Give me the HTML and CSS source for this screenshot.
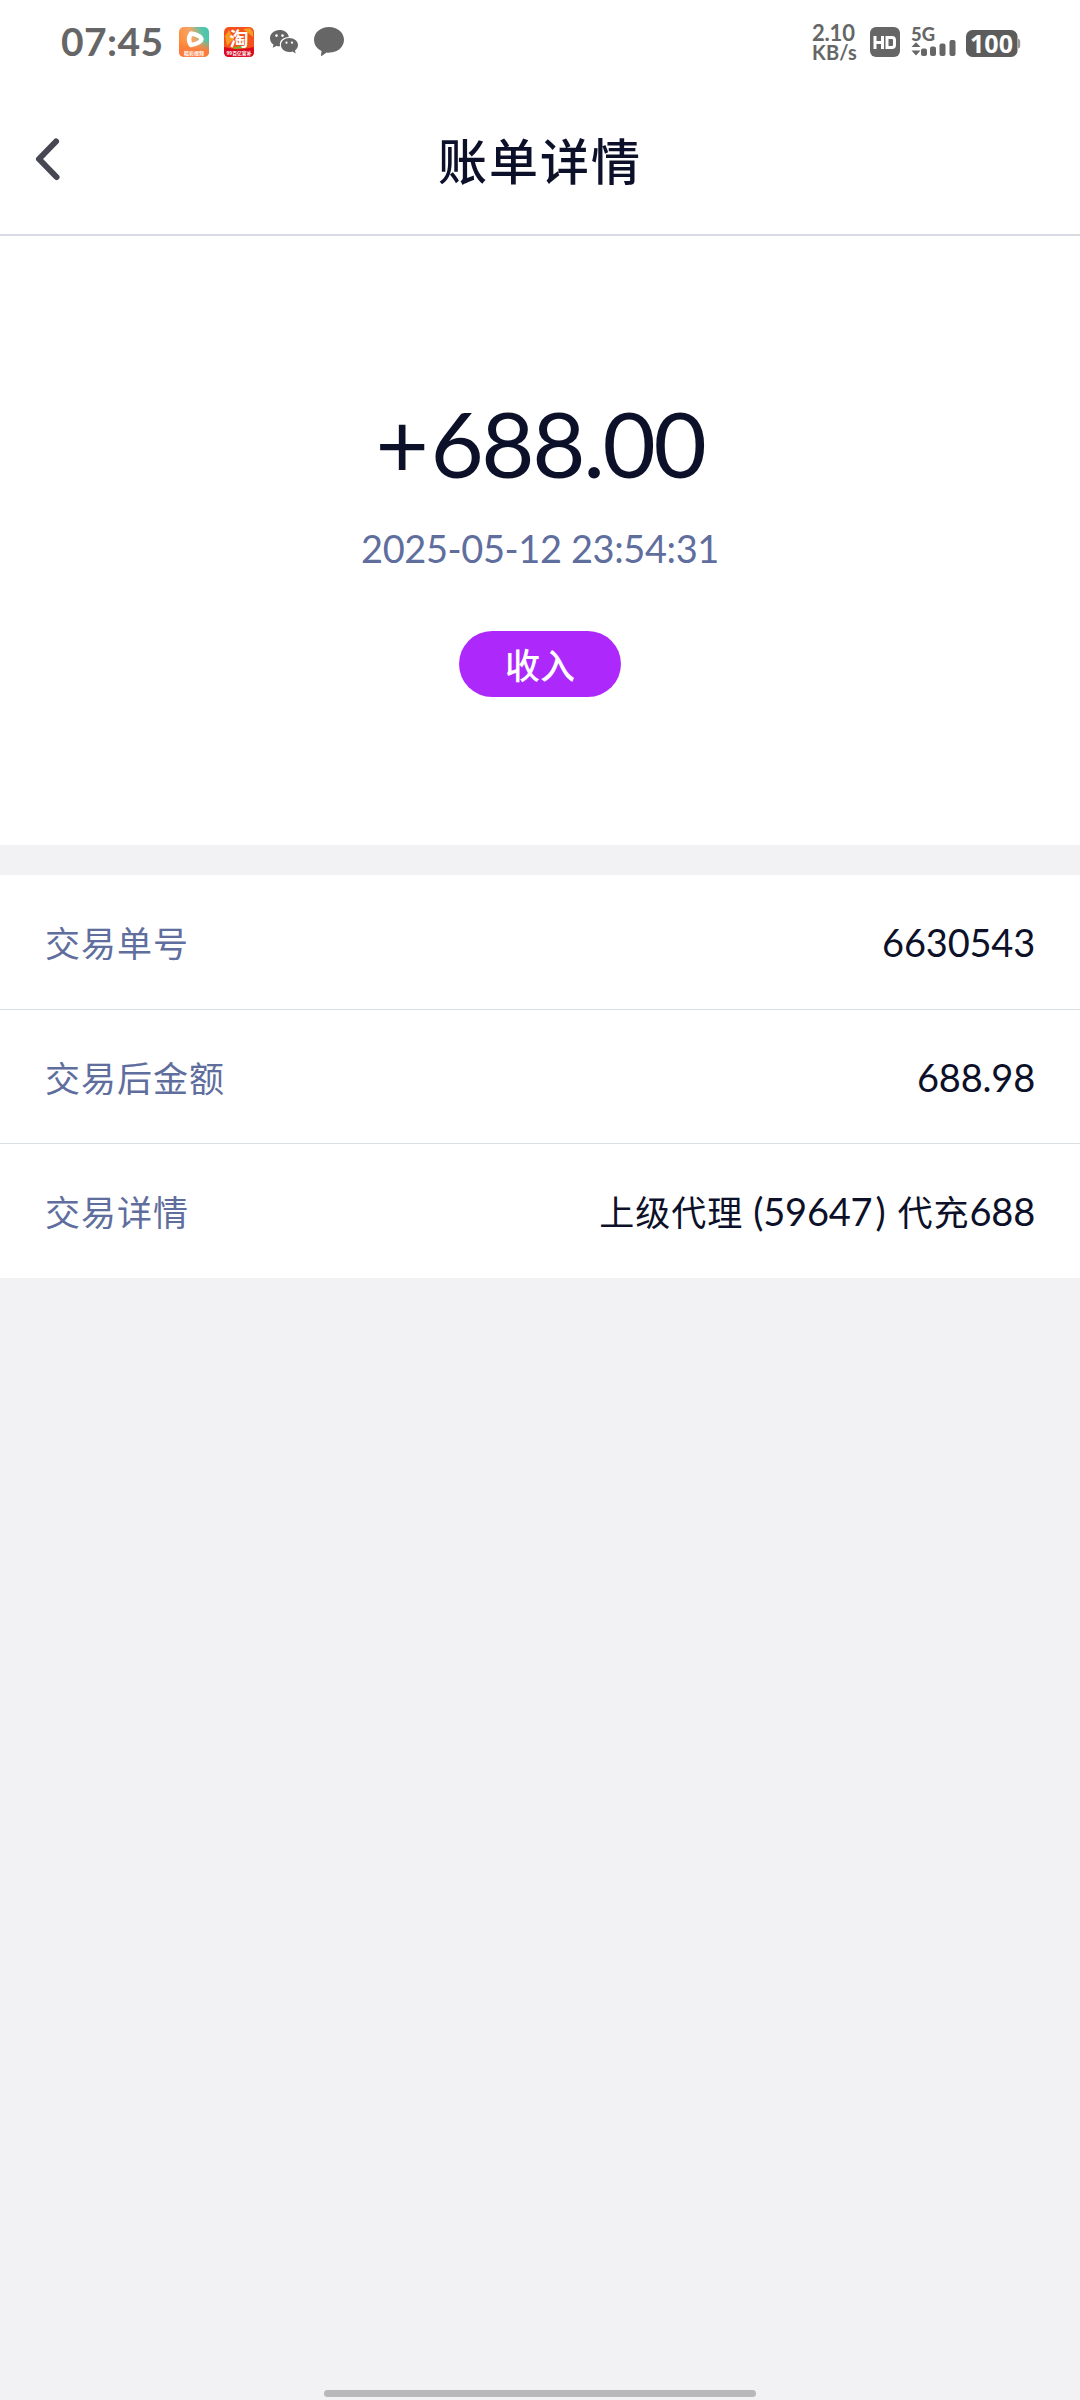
FILE: index.html
```html
<!DOCTYPE html>
<html lang="zh-CN">
<head>
<meta charset="utf-8">
<meta name="viewport" content="width=device-width">
<title>账单详情</title>
<link rel="stylesheet" href="styles.css">
</head>
<body>
<div class="status">
  <span class="clock">07:45</span>
  <div class="apps">
    <svg class="app" viewBox="0 0 30 30">
      <defs>
        <linearGradient id="video" x1="0" y1="0.6" x2="1" y2="0.2"><stop offset="0" stop-color="#ff8a35"/><stop offset=".5" stop-color="#f5a566"/><stop offset=".8" stop-color="#5cc5a5"/><stop offset="1" stop-color="#43c6b0"/></linearGradient>
        <linearGradient id="fade" x1="0" y1="0" x2="0" y2="1"><stop offset=".45" stop-color="#ff7a30" stop-opacity="0"/><stop offset=".8" stop-color="#fb7a3c"/></linearGradient>
      </defs>
      <rect width="30" height="30" rx="5" fill="url(#video)"/>
      <rect width="30" height="30" rx="5" fill="url(#fade)"/>
      <path d="M12 6.500Q22 8.500 22.500 12Q22 16 12 18Q8 12.500 12 6.500Z" fill="none" stroke="#fff" stroke-width="4.500" stroke-linejoin="round"/>
      <text x="15" y="27.800" class="tiny" textLength="20">精彩视频</text>
    </svg>
    <svg class="app" viewBox="0 0 30 30">
      <rect width="30" height="30" rx="5" fill="#f4511c"/>
      <path d="M1 9L5 3L10 12L3 19ZM19 2L29 10L29 5L26 1Z" fill="#f99a24"/>
      <path d="M0 20Q15 24 30 20V25Q30 30 25 30H5Q0 30 0 25Z" fill="#d90a20"/>
      <path d="M9 20.500L20 18.500L21 21L10 22Z" fill="#74b52b"/>
      <text x="15" y="18.500" class="tao">淘</text>
      <text x="15" y="27.500" class="tiny" textLength="25" lengthAdjust="spacingAndGlyphs">99百亿官补</text>
    </svg>
    <svg class="wechat" viewBox="0 0 28 24" fill="#666">
      <path d="M9.500 0C4 0 0 3.700 0 8.200C0 11 1.400 13.100 3.500 14.600L2.700 17.700L6.200 15.900Q8 16.400 10.200 16.300C8.500 11 13 6.900 18.900 6.900C18 2.700 14.200 0 9.500 0Z"/>
      <path d="M19.200 8C14.600 8 11 11 11 15C11 19 14.700 22 19.200 22Q21 22 22.600 21.500L25.700 23.400L25 20.400C26.900 19 28 17.200 28 15C28 11 24 8 19.200 8Z"/>
      <g fill="#fff"><circle cx="6.500" cy="5.600" r="1.300"/><circle cx="12.500" cy="5.600" r="1.300"/><circle cx="16.500" cy="12.700" r="1.100"/><circle cx="22" cy="12.700" r="1.100"/></g>
    </svg>
    <svg class="app" viewBox="0 0 30 30"><path d="M15 0C6.500 0 0 5.500 0 12.800C0 17.800 3 21.800 7.500 24L7 28.500Q7.300 29.300 8 28.700L12.500 25.400Q14 25.700 15.500 25.600C23.500 25.600 30 20.200 30 12.800C30 5.500 23.500 0 15 0Z" fill="#666"/></svg>
  </div>
  <div class="signals">
    <div class="speed"><span class="rate">2.10</span><span class="unit">KB/s</span></div>
    <svg class="hd" viewBox="0 0 30 30"><rect width="30" height="30" rx="6" fill="#666"/><path d="M5 9V22M12.500 9V22M5 15.500H12.500M17 10.500H22Q24.500 10.500 24.500 13V18Q24.500 20.500 22 20.500H17Z" fill="none" stroke="#fff" stroke-width="3"/></svg>
    <svg class="network" viewBox="0 0 46 32">
      <text x="0" y="15" class="generation" textLength="24" lengthAdjust="spacingAndGlyphs">5G</text>
      <path d="M0.500 21L5 16.200L9.500 21ZM0.500 24.500H9.500L5 29.500Z" fill="#666"/>
      <g fill="#666"><rect x="10" y="22.500" width="6" height="7.500" rx="2"/><rect x="19" y="20.500" width="6" height="9.500" rx="2"/><rect x="28.500" y="17.500" width="6" height="12.500" rx="2"/><rect x="38.500" y="14" width="6" height="16" rx="2"/></g>
    </svg>
    <svg class="battery" viewBox="0 0 55 27"><rect width="51.500" height="27" rx="6.500" fill="#5c5c5c"/><path d="M52 8.500Q54.200 9 54.200 11V16Q54.200 18 52 18.500Z" fill="#999"/><text x="4" y="22.500" class="charge" textLength="43" lengthAdjust="spacingAndGlyphs">100</text></svg>
  </div>
</div>
<header class="bar">
  <svg class="back" viewBox="0 0 26 44"><path d="M21 4.500L4 22L21.500 40" fill="none" stroke="#474653" stroke-width="6" stroke-linecap="round" stroke-linejoin="round"/></svg>
  <h1 class="title">账单详情</h1>
</header>
<section class="summary">
  <div class="amount"><span class="plus">+</span>688.00</div>
  <div class="date">2025-05-12 23:54:31</div>
  <div class="tag">收入</div>
</section>
<section class="details">
  <div class="row"><span class="label">交易单号</span><span class="value">6630543</span></div>
  <div class="row"><span class="label">交易后金额</span><span class="value">688.98</span></div>
  <div class="row"><span class="label">交易详情</span><span class="value"><span class="han">上级代理</span><span class="open">(</span>59647<span class="close">)</span><span class="han">代充</span>688</span></div>
</section>
<footer class="home"><div class="handle"></div></footer>
</body>
</html>
```
FILE: styles.css
```css
* { box-sizing: border-box; }
body {
  margin: 0;
  height: 2400px;
  display: flex;
  flex-direction: column;
  background: #f2f2f4;
  color: #0c1028;
  font-family: Lato, "Noto Sans CJK SC", sans-serif;
}
svg { display: block; flex: none; overflow: visible; }
.status {
  height: 84px;
  padding: 0 59px 0 61px;
  display: flex;
  align-items: center;
  background: #fff;
  color: #666;
}
.clock {
  width: 118px;
  font-size: 39px;
  font-weight: 700;
  line-height: 82px;
  height: 84px;
  letter-spacing: 0.4px;
}
.apps { display: flex; align-items: center; gap: 15px; }
.app { width: 30px; height: 30px; }
.wechat { width: 28px; height: 24px; margin: 0 1px; }
.tiny { font: 700 5px "Noto Sans CJK SC", sans-serif; fill: #fff; text-anchor: middle; }
.tao { font: 700 19px "Noto Sans CJK SC", sans-serif; fill: #fff; text-anchor: middle; }
.signals { margin-left: auto; display: flex; align-items: center; }
.speed {
  width: 58px;
  display: flex;
  flex-direction: column;
  font-weight: 700;
  line-height: 20px;
}
.rate { font-size: 22px; letter-spacing: -0.2px; }
.unit { font-size: 20px; line-height: 18px; letter-spacing: 0.2px; }
.hd { width: 30px; height: 30px; }
.network { width: 46px; height: 32px; margin: 0 9px 0 11px; }
.generation { font: 900 19px Lato, sans-serif; fill: #666; }
.battery { width: 55px; height: 27px; margin-top: 3px; }
.charge { font: 700 25px "Noto Sans", sans-serif; fill: #fff; }
.bar {
  height: 152px;
  padding: 0 35px;
  display: grid;
  grid-template-columns: 26px 1fr 26px;
  align-items: center;
  background: #fff;
  border-bottom: 2px solid #d8dbe3;
}
.title {
  margin: 0;
  text-align: center;
  font: 500 49px/72px "Noto Sans CJK SC", sans-serif;
  letter-spacing: 2px;
}
.back { width: 26px; height: 44px; }
.summary {
  height: 609px;
  padding-top: 152px;
  display: flex;
  flex-direction: column;
  align-items: center;
  background: #fff;
}
.amount { font-size: 92px; line-height: 110px; letter-spacing: -2.4px; }
.plus { letter-spacing: 1.5px; }
.date { margin-top: 26px; font-size: 38px; line-height: 48px; letter-spacing: -0.4px; color: #606e9e; }
.tag {
  width: 162px;
  height: 66px;
  margin-top: 59px;
  border-radius: 33px;
  background: #ad29fb;
  color: #fff;
  font: 500 35px/66px "Noto Sans CJK SC", sans-serif;
  text-align: center;
}
.details { margin-top: 30px; background: #fff; }
.row {
  height: 134px;
  padding: 0 45px;
  display: flex;
  justify-content: space-between;
  align-items: center;
}
.row:first-child { height: 135px; }
.row:not(:last-child) { border-bottom: 1px solid #d9dfe2; }
.label { font: 400 35px/50px "Noto Sans CJK SC", sans-serif; letter-spacing: 1px; color: #606e9e; }
.value { display: flex; align-items: baseline; font-size: 38px; line-height: 50px; letter-spacing: -0.2px; }
.han { font: 400 35px/50px "Noto Sans CJK SC", sans-serif; letter-spacing: 1px; }
.open { width: 20px; text-align: right; }
.close { width: 25px; padding-left: 3px; }
.home { margin-top: auto; padding-bottom: 3px; display: flex; justify-content: center; }
.handle { width: 432px; height: 7px; border-radius: 4px; background: #b8b8ba; }
```
